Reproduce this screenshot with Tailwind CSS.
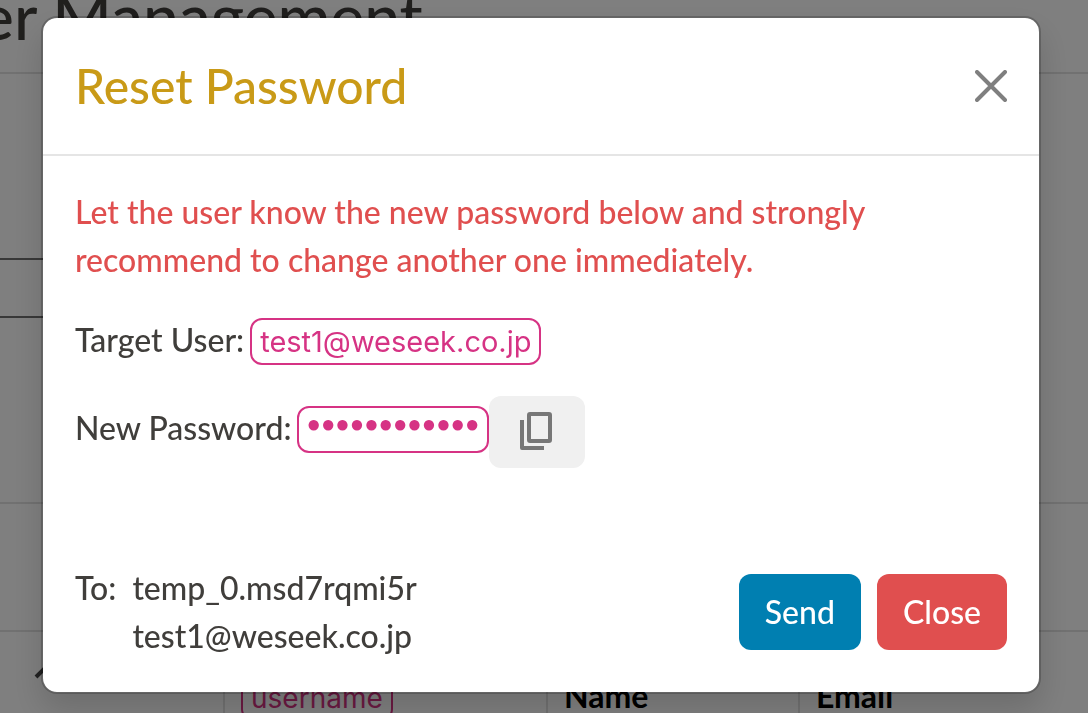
<!DOCTYPE html>
<html lang="en">
<head>
<meta charset="utf-8">
<meta name="viewport" content="width=device-width, initial-scale=1">
<title>User Management</title>
<script src="https://cdn.jsdelivr.net/npm/@tailwindcss/browser@4"></script>
</head>
<body class="h-screen overflow-hidden bg-white font-['Lato',sans-serif] text-[32px] leading-12 font-medium text-[#403e3b]">

<!-- Page behind the dialog -->
<div class="flex h-screen flex-col overflow-hidden" aria-hidden="true">
  <header class="h-[72px] shrink-0">
    <h1 class="-mt-5 -ml-5 text-[64px] leading-[72px]">er Management</h1>
  </header>
  <div class="h-[186px] shrink-0 border-t-2 border-[#e2e2e2]"></div>
  <div class="h-[60px] w-1/2 shrink-0 border-y-2 border-[#707070]"></div>
  <div class="h-[184px] shrink-0"></div>
  <div class="h-32 shrink-0 border-t-2 border-[#e2e2e2]"></div>
  <table class="w-full shrink-0 table-fixed border-collapse border-t-2 border-[#e2e2e2] text-left font-bold text-black">
    <thead>
      <tr class="h-24">
        <th class="w-[224px] border-r-2 border-[#e2e2e2] p-0 align-top">
          <svg class="mt-8 ml-8 size-8" viewBox="0 0 32 32" fill="none" stroke="#444" stroke-width="4"><path d="M4 13 14 3l10 10"/></svg>
        </th>
        <th class="w-[323px] border-r-2 border-[#e2e2e2] px-4 pt-10 pb-0 align-top"><code class="rounded-xl border-2 border-[#d63384] px-2 py-1 font-['Inter',sans-serif] text-[28px] font-normal text-[#d63384]">username</code></th>
        <th class="w-[252px] border-r-2 border-[#e2e2e2] px-4 pt-10 pb-0 align-top">Name</th>
        <th class="px-4 pt-10 pb-0 align-top">Email</th>
      </tr>
    </thead>
  </table>
</div>

<!-- Dialog -->
<div class="fixed inset-0 flex items-start justify-center bg-black/50 pt-4 pr-[47px] pl-[41px]">
  <section role="dialog" aria-modal="true" aria-labelledby="dialog-title" class="w-full max-w-[1000px] rounded-2xl border-2 border-black/20 bg-white bg-clip-padding shadow-[0_16px_32px_rgba(0,0,0,0.15)]">
    <header class="flex items-center justify-between border-b-2 border-[#e5e5e5] p-8">
      <h2 id="dialog-title" class="text-[48px] leading-[72px] font-medium text-[#c99a17]">Reset Password</h2>
      <button type="button" aria-label="Close dialog" class="text-[#7f7f7f]">
        <svg class="size-8" viewBox="0 0 32 32" fill="none" stroke="currentColor" stroke-width="4" stroke-linecap="round"><path d="M2 2 30 30M30 2 2 30"/></svg>
      </button>
    </header>
    <div class="flex flex-col gap-8 p-8 pb-16">
      <p class="max-w-[860px] text-[#e04f4f]">Let the user know the new password below and strongly recommend to change another one immediately.</p>
      <p class="flex h-12 items-start gap-1.5">Target User: <code class="mt-0.5 rounded-xl border-2 border-[#d63384] px-2 font-['Inter',sans-serif] text-[29px] leading-[43px] font-normal text-[#d63384]">test1@weseek.co.jp</code></p>
      <div class="flex h-[72px] items-start">
        <p class="flex gap-[5px] pt-2">New Password: <code class="mt-0.5 h-[47px] rounded-xl border-2 border-[#d63384] px-2 font-['Liberation_Mono',monospace] text-[24px] leading-9 font-normal text-[#d63384]">●●●●●●●●●●●●</code></p>
        <button type="button" aria-label="Copy password" class="flex h-[72px] w-24 items-center justify-center rounded-xl bg-[#f0f0f0] text-[#777]">
          <svg class="size-12" viewBox="0 0 48 48" fill="none" stroke="currentColor" stroke-width="4" stroke-linejoin="round"><rect x="16" y="6" width="21" height="27" rx="1"/><path d="M9 12v28h22"/></svg>
        </button>
      </div>
    </div>
    <footer class="flex items-center justify-between p-8">
      <dl class="flex gap-4">
        <dt>To:</dt>
        <dd>temp_0.msd7rqmi5r<br>test1@weseek.co.jp</dd>
      </dl>
      <div class="flex gap-4">
        <button type="button" class="rounded-xl bg-[#007fb1] px-[26px] py-3.5 text-white">Send</button>
        <button type="button" class="rounded-xl bg-[#e04f4f] px-[26px] py-3.5 text-white">Close</button>
      </div>
    </footer>
  </section>
</div>
</body>
</html>
